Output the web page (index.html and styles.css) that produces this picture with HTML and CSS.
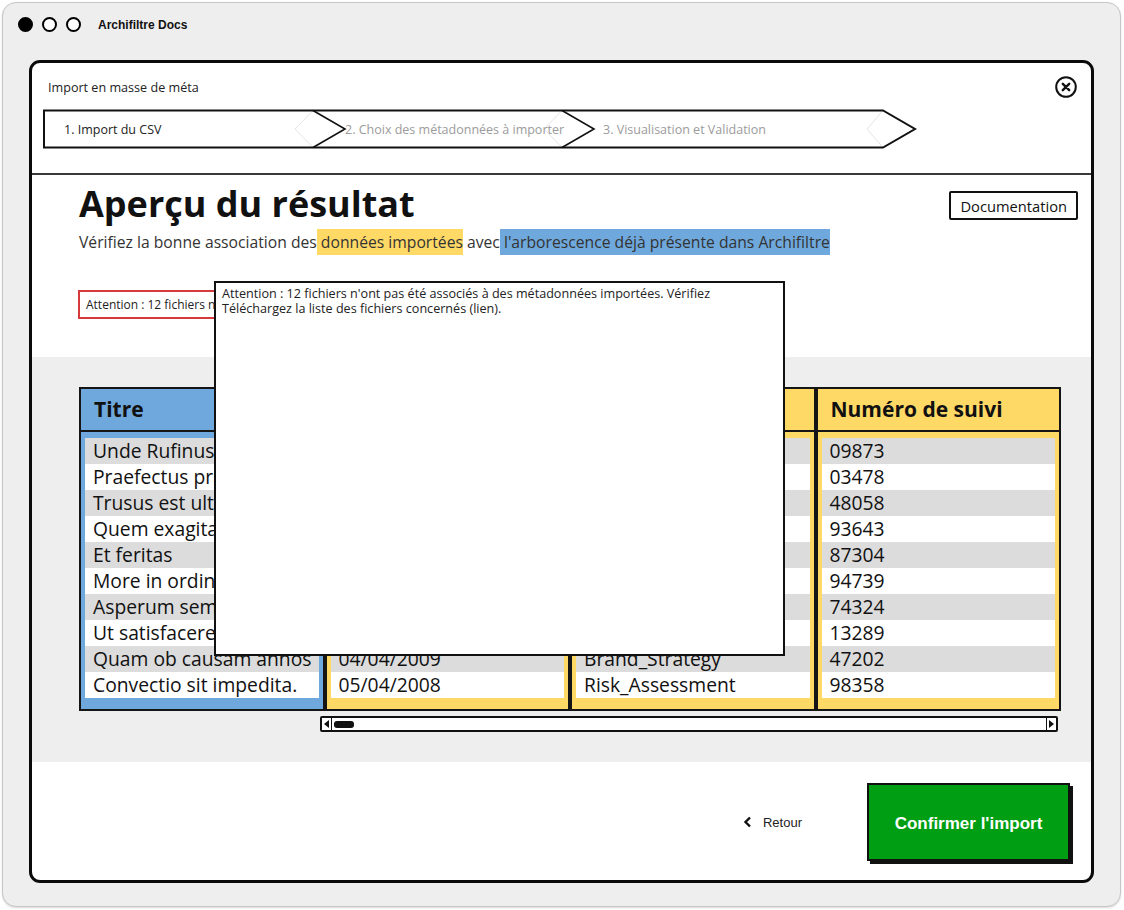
FILE: index.html
```html
<!DOCTYPE html>
<html lang="fr">
<head>
<meta charset="utf-8">
<title>Archifiltre Docs</title>
<link rel="stylesheet" href="styles.css">
</head>
<body>
<div class="window">
  <div class="titlebar">
    <span class="dot filled"></span><span class="dot"></span><span class="dot last"></span>
    <span class="app-name">Archifiltre Docs</span>
  </div>
  <div class="modal">
    <div class="modal-head">
      <div class="modal-title-row">
        <span class="modal-title">Import en masse de méta</span>
        <svg class="close-icon" width="22" height="22" viewBox="0 0 22 22"><circle cx="11" cy="11" r="9.8" fill="none" stroke="#111" stroke-width="2"/><path d="M7.8 7.8 L14.2 14.2 M14.2 7.8 L7.8 14.2" stroke="#111" stroke-width="2.4" stroke-linecap="round"/></svg>
      </div>
      <div class="stepper">
        <svg class="stepper-shape" width="875" height="40" viewBox="0 0 875 40">
          <path d="M270 1.5 L252 20 L270 38.5 M519 1.5 L501 20 L519 38.5 M840 1.5 L824 20 L840 38.5" fill="none" stroke="#e4e4e4" stroke-width="1"/>
          <path d="M1 1.5 H840 L872 20 L840 38.5 H1 Z" fill="none" stroke="#111" stroke-width="2" stroke-linejoin="miter"/>
          <path d="M270 1.5 L302 20 L270 38.5 M519 1.5 L551 20 L519 38.5" fill="none" stroke="#111" stroke-width="1.6"/>
        </svg>
        <div class="step step-1">1. Import du CSV</div>
        <div class="step step-2">2. Choix des métadonnées à importer</div>
        <div class="step step-3">3. Visualisation et Validation</div>
      </div>
    </div>
    <div class="divider"></div>
    <section class="content">
      <div class="content-top">
        <h1 class="page-title">Aperçu du résultat</h1>
        <button class="doc-btn">Documentation</button>
      </div>
      <p class="subtitle">Vérifiez la bonne association des<span class="hl hl-yellow"> données importées</span> avec<span class="hl hl-blue"> l'arborescence déjà présente dans Archifiltre</span></p>
      <div class="alert">Attention : 12 fichiers n'ont pas été associés à des métadonnées importées. Vérifiez</div>
    </section>
    <section class="preview">
      <div class="columns">
        <div class="col col-blue">
          <div class="col-head">Titre</div>
          <div class="col-body">
            <div class="row">Unde Rufinus ea tempestate</div>
            <div class="row">Praefectus praetorio</div>
            <div class="row">Trusus est ultimo</div>
            <div class="row">Quem exagitabat</div>
            <div class="row">Et feritas</div>
            <div class="row">More in ordinem</div>
            <div class="row">Asperum semper</div>
            <div class="row">Ut satisfaceret</div>
            <div class="row">Quam ob causam annos</div>
            <div class="row">Convectio sit impedita.</div>
          </div>
        </div>
        <div class="col col-yellow">
          <div class="col-head">Date de création</div>
          <div class="col-body">
            <div class="row">12/03/2012</div>
            <div class="row">23/07/2015</div>
            <div class="row">01/01/2010</div>
            <div class="row">15/09/2011</div>
            <div class="row">30/06/2014</div>
            <div class="row">08/11/2013</div>
            <div class="row">19/02/2016</div>
            <div class="row">27/05/2017</div>
            <div class="row">04/04/2009</div>
            <div class="row">05/04/2008</div>
          </div>
        </div>
        <div class="col col-yellow">
          <div class="col-head">Nom du fichier</div>
          <div class="col-body">
            <div class="row">Annual_Report</div>
            <div class="row">Budget_2015</div>
            <div class="row">Project_Plan</div>
            <div class="row">Meeting_Notes</div>
            <div class="row">Sales_Forecast</div>
            <div class="row">HR_Policy</div>
            <div class="row">Market_Analysis</div>
            <div class="row">Q3_Review</div>
            <div class="row">Brand_Strategy</div>
            <div class="row">Risk_Assessment</div>
          </div>
        </div>
        <div class="col col-yellow">
          <div class="col-head">Numéro de suivi</div>
          <div class="col-body">
            <div class="row">09873</div>
            <div class="row">03478</div>
            <div class="row">48058</div>
            <div class="row">93643</div>
            <div class="row">87304</div>
            <div class="row">94739</div>
            <div class="row">74324</div>
            <div class="row">13289</div>
            <div class="row">47202</div>
            <div class="row">98358</div>
          </div>
        </div>
      </div>
      <div class="scrollbar">
        <span class="sb-btn sb-left"><span class="tri tri-left"></span></span>
        <span class="sb-thumb"></span>
        <span class="sb-btn sb-right"><span class="tri tri-right"></span></span>
      </div>
    </section>
    <footer class="modal-foot">
      <a class="back"><svg width="9" height="12" viewBox="0 0 9 12"><path d="M7 1.5 L2.5 6 L7 10.5" fill="none" stroke="#111" stroke-width="2.4"/></svg><span>Retour</span></a>
      <button class="confirm">Confirmer l'import</button>
    </footer>
    <div class="tooltip">Attention : 12 fichiers n'ont pas été associés à des métadonnées importées. Vérifiez<br>Téléchargez la liste des fichiers concernés (lien).</div>
  </div>
</div>
</body>
</html>
```
FILE: styles.css
```css
html, body {
  margin: 0;
  padding: 0;
  background: #ffffff;
}
body {
  font-family: "Open Sans", "Liberation Sans", sans-serif;
  color: #111;
}
.window {
  margin: 2px;
  width: 1119px;
  height: 905px;
  box-sizing: border-box;
  border: 1px solid #c6c6c6;
  border-radius: 14px;
  background: #eeeeee;
  box-shadow: 0 1px 2px rgba(0,0,0,0.15);
}
.titlebar {
  height: 57px;
  box-sizing: border-box;
  padding: 14px 0 0 15px;
  display: flex;
  align-items: flex-start;
}
.dot {
  width: 15px;
  height: 15px;
  box-sizing: border-box;
  border: 2px solid #000;
  border-radius: 50%;
  margin-right: 9px;
  background: #fff;
}
.dot.filled { background: #000; }
.dot.last { margin-right: 17px; }
.app-name {
  font-family: "Liberation Sans", Arial, sans-serif;
  font-weight: 700;
  font-size: 12px;
  line-height: 17px;
  color: #111;
}
.modal {
  position: relative;
  margin: 0 26px;
  width: 1065px;
  height: 823px;
  box-sizing: border-box;
  border: 3px solid #0a0a0a;
  border-radius: 11px;
  background: #fff;
  display: flex;
  flex-direction: column;
}
.modal-head {
  padding: 13px 14px 0 11px;
}
.modal-title-row {
  display: flex;
  justify-content: space-between;
  align-items: center;
  height: 22px;
}
.modal-title {
  padding-left: 5px;
  font-size: 12.6px;
  color: #222;
}
.close-icon { display: block; }
.stepper {
  position: relative;
  margin-top: 11px;
  width: 875px;
  height: 40px;
  display: flex;
  align-items: center;
}
.stepper-shape {
  position: absolute;
  left: 0;
  top: 0;
}
.step {
  position: relative;
  box-sizing: border-box;
  font-size: 12.5px;
  color: #9b9b9b;
  white-space: nowrap;
}
.step-1 { width: 270px; padding-left: 21px; color: #222; }
.step-2 { width: 249px; padding-left: 32px; }
.step-3 { padding-left: 41px; }
.divider {
  margin-top: 24px;
  height: 0;
  border-top: 2px solid #3a3a3a;
}
.content {
  height: 182px;
  box-sizing: border-box;
  padding: 8px 13px 0 47px;
}
.content-top {
  display: flex;
  justify-content: space-between;
  align-items: flex-start;
}
.page-title {
  margin: 0;
  font-size: 36px;
  line-height: 41px;
  font-weight: 700;
  color: #111;
}
.doc-btn {
  margin-top: 8px;
  height: 29px;
  padding: 0 9px;
  border: 2px solid #111;
  border-radius: 2px;
  background: #fff;
  font-family: "Open Sans", sans-serif;
  font-size: 14.7px;
  color: #111;
}
.subtitle {
  margin: 6px 0 0;
  font-size: 15.7px;
  line-height: 24px;
  color: #333;
  white-space: nowrap;
}
.hl { padding: 2px 0; }
.hl-yellow { background: #ffd966; }
.hl-blue { background: #6fa8dc; }
.alert {
  margin: 36px 0 0 -1px;
  width: 640px;
  height: 29px;
  box-sizing: border-box;
  border: 2px solid #d63a3a;
  padding-left: 6px;
  font-size: 12px;
  line-height: 25px;
  color: #222;
  white-space: nowrap;
  overflow: hidden;
}
.preview {
  height: 405px;
  box-sizing: border-box;
  padding: 30px 30px 0 47px;
  background: #eeeeee;
}
.columns {
  width: 982px;
  display: grid;
  grid-template-columns: repeat(4, minmax(0, 1fr));
}
.col {
  min-width: 0;
  height: 324px;
  box-sizing: border-box;
  border: 2px solid #151515;
  overflow: hidden;
}
.col-blue { background: #6fa8dc; }
.col-yellow { background: #ffd966; }
.col-head {
  height: 41px;
  border-bottom: 2px solid #151515;
  padding-left: 13px;
  font-size: 21px;
  line-height: 40px;
  font-weight: 700;
  white-space: nowrap;
  overflow: hidden;
}
.col-body {
  padding: 6px 4px 0 4px;
}
.row {
  height: 26px;
  line-height: 25px;
  padding-left: 8px;
  font-size: 19.3px;
  color: #111;
  white-space: nowrap;
  overflow: hidden;
  background: #fff;
}
.row:nth-child(odd) { background: #dcdcdc; }
.scrollbar {
  margin: 5px 0 0 241px;
  width: 738px;
  height: 16px;
  box-sizing: border-box;
  border: 2px solid #111;
  border-radius: 2px;
  background: #fff;
  display: flex;
  align-items: center;
}
.sb-btn {
  width: 9px;
  height: 12px;
  display: flex;
  align-items: center;
  justify-content: center;
}
.sb-left { border-right: 1.5px solid #111; }
.sb-right { margin-left: auto; border-left: 1.5px solid #111; }
.tri { width: 0; height: 0; border-top: 4px solid transparent; border-bottom: 4px solid transparent; }
.tri-left { border-right: 5px solid #111; }
.tri-right { border-left: 5px solid #111; }
.sb-thumb {
  margin-left: 2px;
  width: 20px;
  height: 7px;
  border-radius: 3px;
  background: #111;
}
.modal-foot {
  flex: 1;
  display: flex;
  justify-content: flex-end;
  align-items: center;
  padding: 21px 21px 19px 0;
  box-sizing: border-box;
}
.back {
  display: flex;
  align-items: center;
  gap: 11px;
  margin-right: 65px;
  font-family: "Liberation Sans", Arial, sans-serif;
  font-size: 13px;
  color: #222;
}
.back svg { display: block; }
.confirm {
  width: 203px;
  height: 78px;
  border: 2px solid #111;
  background: #009e13;
  box-shadow: 3px 3px 0 #111;
  color: #fff;
  font-family: "Liberation Sans", Arial, sans-serif;
  font-weight: 700;
  font-size: 17px;
  padding: 4px 0 0;
}
.tooltip {
  position: absolute;
  left: 182px;
  top: 218px;
  width: 571px;
  height: 375px;
  box-sizing: border-box;
  border: 2px solid #111;
  background: #fff;
  padding: 3px 6px;
  font-size: 12.6px;
  line-height: 15px;
  color: #222;
  white-space: nowrap;
}
```
